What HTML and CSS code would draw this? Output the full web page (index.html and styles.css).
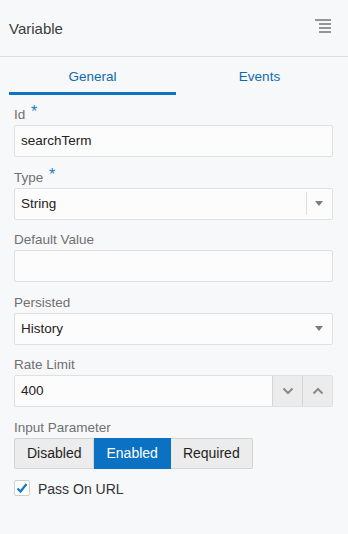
FILE: index.html
```html
<!DOCTYPE html>
<html>
<head>
<meta name="viewport" content="width=device-width, initial-scale=1.0" charset="UTF-8">
<title>Variable</title>
<link rel="stylesheet" href="styles.css">
</head>
<body>
<div class="header">
	<span class="title">Variable</span>
	<svg class="menu" width="16" height="16" viewBox="0 0 16 16">
		<rect x="0" y="1" width="16" height="2" fill="#959595"/>
		<rect x="4" y="5" width="12" height="2" fill="#959595"/>
		<rect x="4" y="9" width="12" height="2" fill="#959595"/>
		<rect x="4" y="13" width="12" height="2" fill="#959595"/>
	</svg>
</div>

<div class="tabs">
	<div class="tab selected">General</div>
	<div class="tab">Events</div>
</div>

<div class="form">
	<div class="field">
		<div class="label">Id <span class="req">*</span></div>
		<div class="input">searchTerm</div>
	</div>
	<div class="field">
		<div class="label">Type <span class="req">*</span></div>
		<div class="input select">
			<span class="value">String</span>
			<span class="divider"></span>
			<span class="arrow"></span>
		</div>
	</div>
	<div class="field">
		<div class="label">Default Value</div>
		<div class="input"></div>
	</div>
	<div class="field">
		<div class="label">Persisted</div>
		<div class="input select">
			<span class="value">History</span>
			<span class="arrow"></span>
		</div>
	</div>
	<div class="field">
		<div class="label">Rate Limit</div>
		<div class="input number">
			<span class="value">400</span>
			<span class="step">
				<svg width="12" height="8" viewBox="0 0 12 8"><path d="M1.5 1.5 L6 6 L10.5 1.5" stroke="#8a8a8a" stroke-width="2" fill="none"/></svg>
			</span>
			<span class="step">
				<svg width="12" height="8" viewBox="0 0 12 8"><path d="M1.5 6.5 L6 2 L10.5 6.5" stroke="#8a8a8a" stroke-width="2" fill="none"/></svg>
			</span>
		</div>
	</div>
	<div class="field">
		<div class="label">Input Parameter</div>
		<div class="buttonset">
			<span class="seg">Disabled</span>
			<span class="seg on">Enabled</span>
			<span class="seg">Required</span>
		</div>
	</div>
	<div class="check">
		<span class="box">
			<svg width="14" height="14" viewBox="0 0 14 14"><path d="M2.5 7.5 L5.5 10.5 L11.5 3" stroke="#1a78c6" stroke-width="2.2" fill="none"/></svg>
		</span>
		<span class="check-text">Pass On URL</span>
	</div>
</div>
</body>
</html>
```

FILE: styles.css
```css
body {
  margin: 0;
  background-color: #f7f8fa;
  font-family: "Liberation Sans", Arial, sans-serif;
  color: #333;
}

.header {
  height: 56px;
  border-bottom: 1px solid #d9e0e6;
  display: flex;
  align-items: center;
  justify-content: space-between;
  padding: 0 17px 0 9px;
}

.title {
  font-size: 15px;
  color: #3c3c3c;
}

.menu {
  margin-top: -5px;
}

.tabs {
  display: flex;
  padding: 0 5px 0 9px;
}

.tab {
  flex: 1;
  height: 35px;
  line-height: 39px;
  text-align: center;
  font-size: 13.5px;
  color: #0e6aab;
  border-bottom: 3px solid transparent;
}

.tab.selected {
  border-bottom-color: #0f73c4;
}

.form {
  padding: 10px 15px 0 14px;
}

.field {
  margin-bottom: 10.5px;
}

.label {
  height: 20px;
  line-height: 20px;
  font-size: 13.5px;
  color: #707070;
}

.req {
  color: #1f7ac4;
  font-size: 16px;
  vertical-align: 2px;
  line-height: 0;
  margin-left: 2px;
}

.input {
  box-sizing: border-box;
  height: 32px;
  border: 1px solid #e0e0e0;
  border-radius: 2px;
  background-color: #fcfcfc;
  padding: 0 6px;
  font-size: 13.5px;
  line-height: 30px;
  color: #222;
  display: flex;
  align-items: center;
}

.value {
  flex: 1;
}

.select {
  padding-right: 9px;
}

.divider {
  width: 1px;
  height: 23px;
  background-color: #dedede;
  margin-right: 8px;
}

.arrow {
  width: 0;
  height: 0;
  border-left: 4.5px solid transparent;
  border-right: 4.5px solid transparent;
  border-top: 5px solid #7c7c7c;
}

.number {
  padding-right: 0;
}

.step {
  width: 29px;
  height: 30px;
  border-left: 1px solid #d6d6d6;
  background-color: #ececec;
  display: flex;
  align-items: center;
  justify-content: center;
}

.buttonset {
  display: flex;
}

.seg {
  box-sizing: border-box;
  height: 31px;
  line-height: 29px;
  padding: 0 12px;
  font-size: 14px;
  color: #1f1f1f;
  background-color: #ececec;
  border: 1px solid #d4d4d4;
  border-left: none;
}

.seg:first-child {
  border-left: 1px solid #d4d4d4;
  border-radius: 2px 0 0 2px;
}

.seg:last-child {
  border-radius: 0 2px 2px 0;
}

.seg.on {
  background-color: #0b72c3;
  border-color: #0b72c3;
  color: white;
}

.check {
  display: flex;
  align-items: center;
  font-size: 14px;
  color: #333;
}

.check-text {
  padding-top: 2px;
}

.box {
  box-sizing: border-box;
  width: 16px;
  height: 16px;
  border: 1px solid #cfcfcf;
  border-radius: 2px;
  background-color: white;
  display: flex;
  align-items: center;
  justify-content: center;
  margin-right: 8px;
}
```
